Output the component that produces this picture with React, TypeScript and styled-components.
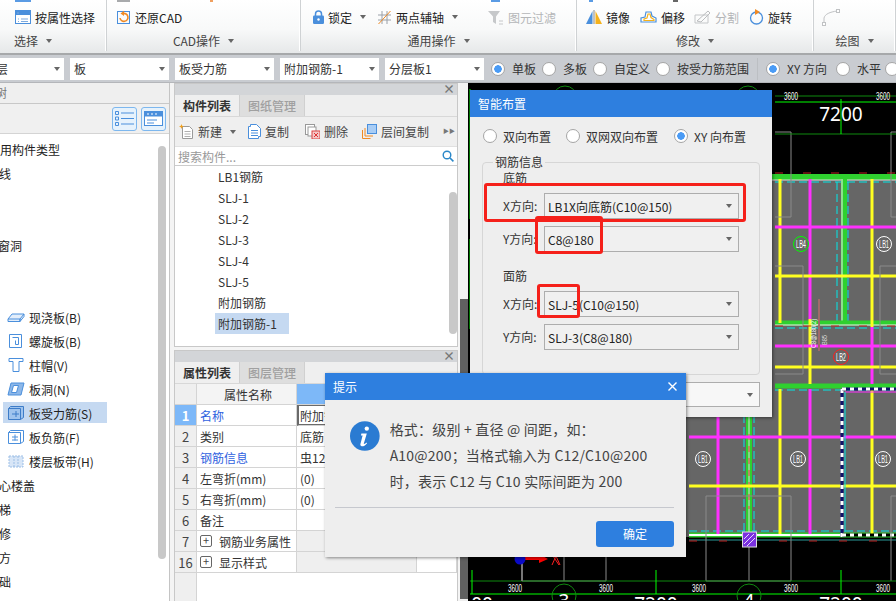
import React from 'react';
import styled, { createGlobalStyle } from 'styled-components';

const GlobalStyle = createGlobalStyle`
  html, body { margin: 0; padding: 0; overflow: hidden; background: #eeeeee; }
  * { box-sizing: border-box; }
  body { font-family: "Noto Sans CJK SC", "Noto Sans", sans-serif; font-size: 12px; color: #333; }
`;

const Page = styled.div`
  position: relative;
  width: 896px;
  height: 601px;
  overflow: hidden;
  display: flex;
  flex-direction: column;
`;

/* ---------- ribbon ---------- */
const Ribbon = styled.div`
  height: 55px;
  flex: none;
  display: flex;
  background: linear-gradient(#ffffff 0%, #f8f9f9 55%, #e6e8e9 100%);
  border-bottom: 2px solid #a6a8aa;
`;
const Group = styled.div<{ $w: number; $ml?: number }>`
  flex: none;
  width: ${p => p.$w}px;
  margin-left: ${p => p.$ml ?? 0}px;
  height: 51px;
  border-right: 1px solid #cfd2d4;
  display: flex;
  flex-direction: column;
  box-shadow: inset -1px 0 0 #fff;
`;
// the row above is scrolled away, only the lower edge of its icons shows
const CutRow = styled.div<{ $pl: number }>`
  height: 3px;
  flex: none;
  padding-left: ${p => p.$pl}px;
  display: flex;
  gap: 80px;
`;
const CutIcon = styled.span<{ $w: number; $tone: string }>`
  flex: none;
  width: ${p => p.$w}px;
  height: 2px;
  background: ${p => p.$tone};
`;
const GroupItems = styled.div<{ $pl: number }>`
  height: 28px;
  flex: none;
  padding-left: ${p => p.$pl}px;
  display: flex;
  align-items: center;
  color: #222;
`;
const GroupLabel = styled.div`
  height: 16px;
  margin-top: 2px;
  line-height: 14px;
  display: flex;
  justify-content: center;
  align-items: center;
  gap: 8px;
  color: #444;
`;
const Item = styled.div<{ $w: number; $off?: boolean }>`
  flex: none;
  width: ${p => p.$w}px;
  display: flex;
  align-items: center;
  gap: 4px;
  white-space: nowrap;
  color: ${p => (p.$off ? '#b4b6b8' : '#222')};
`;
const Caret = styled.i<{ $tone?: string }>`
  flex: none;
  display: inline-block;
  width: 0;
  height: 0;
  border-left: 3.5px solid transparent;
  border-right: 3.5px solid transparent;
  border-top: 4px solid ${p => p.$tone ?? '#666'};
`;
const ItemCaret = styled(Caret)`
  margin-left: 4px;
`;

/* ---------- option bar ---------- */
const OptionBar = styled.div`
  height: 28px;
  flex: none;
  display: flex;
  align-items: center;
  background: #c9ccd1;
  gap: 6px;
  border-bottom: 1px solid #b4b6ba;
`;
const BarSelect = styled.div<{ $w: number; $ml?: number }>`
  flex: none;
  width: ${p => p.$w}px;
  margin-left: ${p => p.$ml ?? 0}px;
  height: 22px;
  padding: 0 4px;
  background: #fff;
  display: flex;
  align-items: center;
  justify-content: space-between;
  color: #333;
`;
const RadioRow = styled.div`
  display: flex;
  align-items: center;
  margin-left: 1px;
`;
const RadioDot = styled.span<{ $on?: boolean }>`
  flex: none;
  width: 14px;
  height: 14px;
  border-radius: 50%;
  border: 1px solid #a5a5a5;
  background: ${p => (p.$on ? 'radial-gradient(circle, #4a9bf5 0 3.5px, #fff 4px)' : '#fff')};
`;
const BarRadio = styled.label<{ $w: number }>`
  flex: none;
  width: ${p => p.$w}px;
  display: flex;
  align-items: center;
  gap: 7px;
  white-space: nowrap;
  color: #333;
`;
const BarDivider = styled.span`
  flex: none;
  width: 1px;
  height: 22px;
  margin: 0 8px 0 7px;
  background: #bcbfc3;
`;

/* ---------- main area ---------- */
const Main = styled.div`
  flex: 1;
  min-height: 0;
  display: flex;
`;
const TreePanel = styled.div`
  position: relative;
  flex: none;
  width: 170px;
  background: #fff;
  border-right: 1px solid #c4c4c4;
  display: flex;
  flex-direction: column;
  overflow: hidden;
`;
const TreeTitle = styled.div`
  height: 21px;
  flex: none;
  margin-left: -29px;
  line-height: 20px;
  background: #efefef;
  border-bottom: 1px solid #c8c8c8;
  color: #777;
`;
const TreeTools = styled.div`
  height: 30px;
  flex: none;
  background: #f0f0f0;
  border-bottom: 1px solid #d4d4d4;
  display: flex;
  justify-content: flex-end;
  align-items: center;
  gap: 4px;
  padding-right: 3px;
`;
const ViewBtn = styled.div`
  width: 25px;
  height: 24px;
  border: 1px solid #7db7ee;
  border-radius: 3px;
  background: #e6f2fc;
  display: flex;
  align-items: center;
  justify-content: center;
`;
const TreeList = styled.div`
  padding-top: 3px;
`;
const TreeRow = styled.div<{ $indent: number; $on?: boolean }>`
  height: 24px;
  display: flex;
  align-items: center;
  gap: 4px;
  white-space: nowrap;
  color: #222;
  margin-left: ${p => p.$indent}px;
`;
const TreeChild = styled(TreeRow)`
  width: 104px;
  height: 24px;
  margin-left: 3px;
  padding-left: 4px;
  background: ${p => (p.$on ? 'linear-gradient(#c5d9f1, #c5d9f1) 0 1px / 100% 21px no-repeat' : 'none')};
`;
const ScrollThumb = styled.div<{ $top: number; $h: number; $right: number }>`
  position: absolute;
  top: ${p => p.$top}px;
  right: ${p => p.$right}px;
  width: 8px;
  height: ${p => p.$h}px;
  border-radius: 4px;
  background: #c8c8c8;
`;

const Center = styled.div`
  flex: none;
  width: 290px;
  padding: 0 2px 0 4px;
  display: flex;
  flex-direction: column;
  gap: 3px;
  background: #f4f4f4;
`;
const Dock = styled.div<{ $h?: number }>`
  position: relative;
  flex: ${p => (p.$h ? `none` : '1')};
  height: ${p => (p.$h ? `${p.$h}px` : 'auto')};
  min-height: 0;
  background: #fff;
  border: 1px solid #c8c8c8;
  border-bottom: ${p => (p.$h ? '1px solid #c8c8c8' : 'none')};
  display: flex;
  flex-direction: column;
  overflow: hidden;
`;
const DockBar = styled.div`
  height: 11px;
  flex: none;
  background: #d3d5d8;
  color: #777;
  font-size: 12px;
  line-height: 10px;
  text-align: right;
  padding-right: 2px;
  font-weight: 700;
`;
const Tabs = styled.div`
  height: 22px;
  flex: none;
  display: flex;
  background: #efefef;
  border-bottom: 1px solid #d8d8d8;
`;
const Tab = styled.div<{ $on?: boolean }>`
  width: 65px;
  text-align: center;
  line-height: 21px;
  border-right: 1px solid #d0d0d0;
  font-weight: ${p => (p.$on ? 700 : 500)};
  color: ${p => (p.$on ? '#333' : '#a0a0a0')};
  background: ${p => (p.$on ? '#efefef' : '#dedede')};
`;
const DockTools = styled.div`
  height: 30px;
  flex: none;
  display: flex;
  align-items: center;
  padding-left: 4px;
  background: #efefef;
  border-bottom: 1px solid #e0e0e0;
  position: relative;
`;
const ToolBtn = styled.div<{ $w: number }>`
  flex: none;
  width: ${p => p.$w}px;
  display: flex;
  align-items: center;
  gap: 4px;
  white-space: nowrap;
  color: #444;
`;
const MoreArrows = styled.span`
  position: absolute;
  right: 2px;
  top: 9px;
  font-size: 6px;
  line-height: 10px;
  color: #777;
`;
const Search = styled.div`
  height: 19px;
  flex: none;
  display: flex;
  align-items: center;
  justify-content: space-between;
  padding: 0 3px;
  color: #999;
  border-bottom: 1px solid #ccc;
`;
const CompList = styled.div`
  padding-left: 40px;
`;
const CompRow = styled.div<{ $on?: boolean }>`
  width: 74px;
  height: 21px;
  line-height: 21px;
  padding-left: 3px;
  white-space: nowrap;
  color: #333;
  background: ${p => (p.$on ? '#c5d9f1' : 'transparent')};
`;

const PropTable = styled.div`
  display: grid;
  grid-template-columns: 22px 100px 120px 40px;
  grid-auto-rows: 21px;
  flex: none;
`;
const Cell = styled.div<{ $bg?: string; $link?: boolean; $center?: boolean; $focus?: boolean }>`
  display: flex;
  align-items: center;
  gap: 7px;
  padding-left: ${p => (p.$focus ? 1 : 3)}px;
  white-space: nowrap;
  overflow: hidden;
  border-right: 1px solid #d4d4d4;
  border-bottom: 1px solid #d4d4d4;
  border-left: ${p => (p.$focus ? '2px solid #6a6a6a' : 'none')};
  box-shadow: ${p => (p.$focus ? 'inset 0 -1px 0 #6a6a6a, inset 0 1px 0 #6a6a6a' : 'none')};
  background: ${p => p.$bg ?? '#fff'};
  color: ${p => (p.$link ? '#2f62e0' : '#333')};
  justify-content: ${p => (p.$center ? 'center' : 'flex-start')};
`;
const NumCell = styled(Cell)<{ $sel?: boolean }>`
  padding: 0;
  justify-content: center;
  font-size: 13px;
  background: ${p => (p.$sel ? '#7db8f8' : '#efefef')};
  color: ${p => (p.$sel ? '#fff' : '#444')};
  font-weight: ${p => (p.$sel ? 700 : 400)};
`;
const PlusBox = styled.span`
  flex: none;
  width: 12px;
  height: 12px;
  margin-left: 0;
  border: 1px solid #666;
  border-radius: 2px;
  font-size: 11px;
  line-height: 9px;
  text-align: center;
  color: #444;
`;
const NumRail = styled.div`
  flex: 1;
  width: 22px;
  background: #efefef;
  border-right: 1px solid #d4d4d4;
`;
const Splitter = styled.div`
  flex: none;
  width: 8px;
  display: flex;
  flex-direction: column;
`;
const SplitPart = styled.div<{ $h?: number; $dark?: boolean }>`
  flex: ${p => (p.$h ? 'none' : '1')};
  height: ${p => (p.$h ? `${p.$h}px` : 'auto')};
  background: ${p => (p.$dark ? '#606060' : '#f2f2f2')};
`;
const Canvas = styled.div`
  flex: 1;
  background: #000;
  overflow: hidden;
`;
const CadSvg = styled.svg`
  display: block;
  width: 431px;
  height: 517px;
`;

/* ---------- dialogs ---------- */
const Dialog = styled.div<{ $x: number; $y: number; $w: number; $h: number }>`
  position: absolute;
  left: ${p => p.$x}px;
  top: ${p => p.$y}px;
  width: ${p => p.$w}px;
  height: ${p => p.$h}px;
  background: #eeeeee;
  box-shadow: 1px 1px 3px rgba(0, 0, 0, 0.45);
  display: flex;
  flex-direction: column;
`;
const DialogHead = styled.div`
  height: 27px;
  flex: none;
  padding: 0 8px;
  display: flex;
  align-items: center;
  justify-content: space-between;
  background: #2e7fdf;
  color: #fff;
`;
const TypeRow = styled.div`
  height: 42px;
  flex: none;
  padding: 0 0 4px 13px;
  display: flex;
  align-items: center;
`;
const TypeRadio = styled.label<{ $w: number }>`
  flex: none;
  width: ${p => p.$w}px;
  display: flex;
  align-items: center;
  gap: 6px;
  white-space: nowrap;
`;
const Fieldset = styled.div`
  position: relative;
  flex: none;
  width: 278px;
  height: 213px;
  margin: 3px 0 0 12px;
  border: 1px solid #d6d6d6;
  border-radius: 4px;
  padding: 6px 0 0 20px;
`;
const Legend = styled.span`
  position: absolute;
  left: 10px;
  top: -9px;
  padding: 0 2px;
  line-height: 16px;
  background: #eeeeee;
`;
const SubTitle = styled.div<{ $mt?: number }>`
  height: 17px;
  line-height: 17px;
  margin-top: ${p => p.$mt ?? 0}px;
  color: #333;
`;
const FieldRow = styled.div`
  height: 26px;
  margin-top: 7px;
  display: flex;
  align-items: center;
`;
const FieldLabel = styled.span`
  flex: none;
  width: 41px;
  margin-top: -2px;
  white-space: nowrap;
`;
const FieldSelect = styled.div<{ $w: number; $h: number; $bg?: string }>`
  flex: none;
  width: ${p => p.$w}px;
  height: ${p => p.$h}px;
  padding: 0 6px 0 3px;
  border: 1px solid #adadad;
  background: ${p => p.$bg ?? '#f0f0f0'};
  display: flex;
  align-items: center;
  justify-content: space-between;
  white-space: nowrap;
  color: #222;
`;
const FooterSelect = styled(FieldSelect)`
  margin: 7px 0 0 auto;
  margin-right: 12px;
`;
const Mark = styled.div<{ $x: number; $y: number; $w: number; $h: number }>`
  position: absolute;
  left: ${p => p.$x}px;
  top: ${p => p.$y}px;
  width: ${p => p.$w}px;
  height: ${p => p.$h}px;
  border: 3px solid #f5201a;
  border-radius: 3px;
`;
const TipBody = styled.div`
  flex: 1;
  padding: 21px 0 0 25px;
  display: flex;
  gap: 10px;
`;
const TipText = styled.div`
  width: 300px;
  margin-top: -5px;
  font-size: 14px;
  letter-spacing: 0.2px;
  line-height: 26px;
  white-space: nowrap;
  color: #444;
`;
const TipFoot = styled.div`
  height: 50px;
  flex: none;
  margin: 0 12px 0 10px;
  border-top: 1px solid #c6c8ce;
  display: flex;
  justify-content: flex-end;
  align-items: center;
`;
const OkBtn = styled.div`
  width: 78px;
  height: 26px;
  margin-top: 3px;
  border-radius: 3px;
  background: #2e7fdf;
  color: #fff;
  text-align: center;
  line-height: 26px;
`;
const CloseX = styled.svg`
  flex: none;
  margin-right: 1px;
`;

/* ---------- icons ---------- */
const I = { blue: '#4a8fdc', orange: '#f08a24', grey: '#b9bbbd' };

const IconSelectAttr = () => (
  <svg width="16" height="15" viewBox="0 0 16 15"><rect x=".5" y=".5" width="15" height="13" fill="#fff" stroke={I.blue} /><rect x="1" y="1" width="14" height="4" fill={I.blue} /><path d="M2 3h2M6 9h7M6 11.5h7M3 9h1M3 11.5h1" stroke="#7ba9de" /></svg>
);
const IconRestore = () => (
  <svg width="15" height="15" viewBox="0 0 15 15"><rect x="1.5" y="1.5" width="12" height="12" fill="none" stroke={I.blue} /><path d="M4 8a4 4 0 1 0 3-4.5" fill="none" stroke={I.orange} strokeWidth="1.6" /><path d="M8 .8 4.5 3.6 8 6z" fill={I.orange} /></svg>
);
const IconLock = () => (
  <svg width="11" height="14" viewBox="0 0 11 14"><path d="M2.5 6V4a3 3 0 0 1 6 0v2" fill="none" stroke="#4a8fdc" strokeWidth="1.5" /><rect y="5.5" width="11" height="8.5" rx="1.2" fill="#4a8fdc" /><circle cx="5.5" cy="9.5" r="1.2" fill="#fff" /></svg>
);
const IconTwoPoint = () => (
  <svg width="15" height="15" viewBox="0 0 15 15"><path d="M1 5h13M1 10h13M5 1v13M10 1v13" stroke="#9aa0a8" /><path d="M1.5 14 13.5 1" stroke={I.orange} /></svg>
);
const IconFilter = () => (
  <svg width="17" height="15" viewBox="0 0 17 15"><path d="M1 1h12L9 6.5V14L6 12V6.5z" fill="#c6c8ca" /><path d="M12 11h4M12 14h4" stroke="#c6c8ca" /></svg>
);
const IconMirror = () => (
  <svg width="16" height="14" viewBox="0 0 16 14"><path d="M6.5 1v13H0z" fill={I.blue} /><path d="M9.5 1v13H16z" fill="#f5b21d" /><path d="M8 0v14" stroke="#888" /></svg>
);
const IconOffset = () => (
  <svg width="17" height="14" viewBox="0 0 17 14"><path d="M1 12V8l4-1 1-5h5l1 4 4 2v4z" fill="#fff" stroke={I.blue} strokeWidth="1.2" /><path d="M4 10.5V9l3-1 1-4h2l1 3.5 3 2v1z" fill="none" stroke="#f5b21d" strokeWidth="1.2" /></svg>
);
const IconSplit = () => (
  <svg width="17" height="14" viewBox="0 0 17 14"><path d="M1 5h13v8H1z" fill="none" stroke="#c4c6c8" /><path d="M3 11 14 1l2 2-9 9z" fill="none" stroke="#bbbdbf" /></svg>
);
const IconRotate = () => (
  <svg width="15" height="16" viewBox="0 0 15 16"><circle cx="7.5" cy="9" r="6" fill="none" stroke={I.blue} strokeWidth="1.3" /><path d="M6 0l5 3-5 3z" fill={I.orange} /></svg>
);
const IconDraw = () => (
  <svg width="18" height="17" viewBox="0 0 18 17"><path d="M2 15V9C3 5 8 3 15 2" fill="none" stroke="#c0c2c4" /><rect x=".5" y="13.5" width="3" height="3" fill="#fff" stroke="#c0c2c4" /><rect x="14.5" y=".5" width="3" height="3" fill="#fff" stroke="#c0c2c4" /></svg>
);
const IconList = () => (
  <svg width="19" height="15" viewBox="0 0 19 15"><path d="M6 2h13M6 7.5h13M6 13h13" stroke="#4a8fdc" /><path d="M.5.5h3v3h-3zM.5 6h3v3h-3zM.5 11.5h3v3h-3z" fill="none" stroke="#4a8fdc" /></svg>
);
const IconCard = () => (
  <svg width="19" height="15" viewBox="0 0 19 15"><rect x=".5" y=".5" width="18" height="14" fill="#fff" stroke="#4a8fdc" /><rect x="1" y="1" width="17" height="4.5" fill="#4a8fdc" /><path d="M3 9h10M3 12h7" stroke="#4a8fdc" /><path d="M3 3h2M7 3h2M11 3h2" stroke="#fff" /></svg>
);
const IconNew = () => (
  <svg width="15" height="15" viewBox="0 0 15 15"><path d="M3.5 2.5h7l3 3v9h-10z" fill="#fff" stroke="#9a9a9a" /><path d="M5.5 7.5h6M5.5 10h6M5.5 12.5h6" stroke="#b0b0b0" /><path d="M2.5 0l.7 1.8L5 2.5l-1.8.7L2.5 5l-.7-1.8L0 2.5l1.8-.7z" fill="#f0a020" /></svg>
);
const IconCopy = () => (
  <svg width="13" height="15" viewBox="0 0 13 15"><path d="M.5 2.5h2v-2h6l4 4v8h-2v2h-10z" fill="#fff" stroke={I.blue} /><path d="M3 6.5h7M3 9h7M3 11.5h7" stroke={I.blue} /></svg>
);
const IconDelete = () => (
  <svg width="15" height="15" viewBox="0 0 15 15"><rect x=".5" y=".5" width="9" height="10" fill="#fff" stroke="#999" /><rect x="3" y="3" width="8" height="9" fill="#fff" stroke="#999" /><rect x="7" y="7" width="8" height="8" fill="#f3c9c9" stroke="#d44" /><path d="M9 9l4 4M13 9l-4 4" stroke="#d33" /></svg>
);
const IconFloorCopy = () => (
  <svg width="15" height="15" viewBox="0 0 15 15"><path d="M.5 6v8.500h8" fill="none" stroke={I.orange} /><path d="M3 4v8h8" fill="none" stroke={I.orange} /><rect x="5.500" y=".5" width="9" height="9" fill="#a9cdf5" stroke={I.blue} /></svg>
);
const IconSearch = () => (
  <svg width="12" height="12" viewBox="0 0 12 12"><circle cx="5" cy="5" r="3.8" fill="none" stroke="#2a87c8" strokeWidth="1.4" /><path d="M8 8l3.400 3.400" stroke="#2a87c8" strokeWidth="1.6" /></svg>
);
const IconInfo = () => (
  <svg width="30" height="30" viewBox="0 0 30 30"><circle cx="15" cy="15" r="15" fill="#2a7bd2" /><circle cx="17" cy="7.500" r="2.200" fill="#fff" /><path d="M11.500 12.500h5.500l-3 10c-.2 1 .8 1 2.800-.8l.5.600c-2.300 2.600-4 3.400-5.500 3.100-1.300-.3-1.500-1.400-1.200-2.500l2.200-8.500h-1.700z" fill="#fff" /></svg>
);

const TreeIcon = ({ kind }: { kind: number }) => {
  const s = '#4a8fdc';
  return (
    <svg width="18" height="16" viewBox="0 0 18 16">
      {kind === 0 && <path d="M1 10l4-5h12l-4 5v2.500H1zM1 10h12M13 10v2.500l4-5V5" fill="#e3eefb" stroke={s} />}
      {kind === 1 && <path d="M2.500 1.500h12v13h-12zM5.500 4.500h6v7h-3V7.500" fill="none" stroke={s} />}
      {kind === 2 && <path d="M2 1.500h14v3h-4v10H6v-10H2z" fill="#fff" stroke={s} />}
      {kind === 3 && <path d="M4 2h13l-3 12H1z M6.500 4.500h5l-2 7h-5z" fill="#8db7e8" fillRule="evenodd" stroke={s} />}
      {kind === 4 && <path d="M1.500 3.500h12v11h-12zM1.500 3.500l2-2h13v11l-3 2M5 9h7M9 6v6" fill="#9fc4ee" stroke="#3d7cc8" />}
      {kind === 5 && <path d="M1.500 3.500h12v11h-12zM1.500 3.500l2-2h13v11l-3 2M5 8h6M8 5.500v6M5 11h6" fill="#fff" stroke={s} />}
      {kind === 6 && <path d="M2 3h14v11H2zM7 3v11M11 3v11" fill="#d8e6f7" stroke="#9dbfe6" strokeDasharray="2 1" />}
    </svg>
  );
};

/* ---------- CAD drawing, coordinates are page pixels ---------- */
const YELLOW = '#ffff20';
const MAGENTA = '#ff30ff';
const GREEN = '#2fd02f';
const BRIGHT = '#00ff00';
const DARKGREEN = '#0f8a0f';
const CYAN = '#00e8e8';
const LINE = '#8a8a8a';

const seg = (x1: number, y1: number, x2: number, y2: number, color: string, w: number, dash?: string) => ({ x1, y1, x2, y2, color, w, dash });

const cadLines = [
  // beams
  seg(470, 178, 896, 178, GREEN, 6),
  seg(470, 181, 896, 181, '#ddd', 1),
  seg(772, 183, 896, 183, CYAN, 1, '8 4'),
  seg(841, 180, 841, 322, GREEN, 6),
  seg(839, 180, 839, 322, '#eee', 1),
  seg(834, 183, 834, 322, CYAN, 1, '8 4'),
  seg(845, 183, 845, 322, CYAN, 1, '8 4'),
  seg(772, 324, 896, 324, GREEN, 5),
  seg(772, 326, 896, 326, '#eee', 1),
  seg(772, 329, 896, 329, CYAN, 1, '8 4'),
  seg(772, 387, 896, 387, GREEN, 5),
  seg(772, 391, 896, 391, CYAN, 1, '8 4'),
  seg(686, 536, 896, 536, GREEN, 5),
  seg(686, 536, 840, 536, '#ffffff', 2),
  seg(686, 532, 896, 532, CYAN, 1, '8 4'),
  seg(686, 541, 896, 541, '#2a9a9a', 1),
  seg(746, 390, 746, 535, GREEN, 6),
  seg(746, 390, 746, 535, '#ddd', 1),
  seg(741, 392, 741, 532, CYAN, 1, '8 4'),
  seg(751, 392, 751, 532, CYAN, 1, '8 4'),
  seg(746, 435, 746, 510, '#f04040', 1, '6 6'),
  // bars
  seg(777, 180, 777, 324, YELLOW, 3),
  seg(777, 390, 777, 535, YELLOW, 3),
  seg(869, 180, 869, 328, YELLOW, 3),
  seg(869, 328, 869, 385, MAGENTA, 3),
  seg(869, 390, 869, 535, YELLOW, 3),
  seg(807, 180, 807, 320, MAGENTA, 3),
  seg(807, 320, 807, 385, YELLOW, 3),
  seg(807, 390, 807, 535, MAGENTA, 3),
  seg(715, 417, 715, 535, MAGENTA, 3),
  seg(772, 228, 896, 228, MAGENTA, 3),
  seg(772, 347, 896, 347, MAGENTA, 3),
  seg(686, 438, 896, 438, MAGENTA, 3),
  seg(772, 277, 896, 277, YELLOW, 3),
  seg(772, 368, 896, 368, YELLOW, 3),
  seg(686, 487, 896, 487, YELLOW, 3),
  // frame of the selected slab
  seg(839, 390, 839, 538, '#10106a', 3),
  seg(839, 390, 839, 538, '#ffffff', 3, '4 4'),
  seg(839, 390, 896, 390, '#10106a', 3),
  seg(839, 390, 896, 390, '#ffffff', 3, '4 4'),
  seg(839, 536, 896, 536, '#000', 3),
  seg(839, 536, 896, 536, '#ffffff', 3, '4 4'),
  seg(842, 393, 896, 393, MAGENTA, 1),
  seg(842, 393, 842, 533, CYAN, 1),
  // column outlines
  seg(772, 133, 788, 133, LINE, 1),
  seg(788, 133, 788, 218, LINE, 1),
  seg(772, 218, 788, 218, LINE, 1),
  seg(896, 133, 888, 133, LINE, 1),
  seg(888, 133, 888, 218, LINE, 1),
  seg(896, 218, 888, 218, LINE, 1),
  seg(772, 267, 800, 267, LINE, 1),
  seg(800, 267, 800, 375, LINE, 1),
  seg(772, 375, 800, 375, LINE, 1),
  seg(896, 267, 877, 267, LINE, 1),
  seg(877, 267, 877, 375, LINE, 1),
  seg(896, 375, 877, 375, LINE, 1),
  seg(703, 497, 703, 582, LINE, 1),
  seg(788, 497, 788, 582, LINE, 1),
  seg(703, 497, 788, 497, LINE, 1),
  seg(888, 497, 888, 582, LINE, 1),
  seg(888, 497, 896, 497, LINE, 1),
  seg(519, 557, 519, 582, LINE, 1),
  seg(603, 557, 603, 582, LINE, 1),
  seg(703, 582, 788, 582, LINE, 1),
  seg(519, 582, 603, 582, LINE, 1),
  seg(561, 557, 561, 582, LINE, 1),
  seg(746, 548, 746, 582, LINE, 1),
  // dimension lines
  seg(772, 97, 896, 97, DARKGREEN, 1),
  seg(772, 103, 896, 103, BRIGHT, 1),
  seg(772, 135, 896, 135, DARKGREEN, 1),
  seg(838, 100, 838, 135, BRIGHT, 1),
  seg(467, 582, 896, 582, DARKGREEN, 1),
  seg(467, 595, 896, 595, BRIGHT, 1),
  seg(469, 571, 469, 595, BRIGHT, 1),
  seg(653, 571, 653, 595, BRIGHT, 1),
  seg(838, 571, 838, 595, BRIGHT, 1),
  seg(467, 90, 467, 220, BRIGHT, 1),
  seg(467, 240, 467, 330, BRIGHT, 1),
  // dimension hint
  seg(816, 300, 816, 352, '#a06a6a', 2),
  // dashed reds on the grid line
  seg(772, 174, 896, 174, '#c02020', 1, '8 20'),
  seg(772, 327, 896, 327, '#c02020', 1, '8 20'),
  seg(686, 542, 896, 542, '#c02020', 1, '8 22'),
];

const slabTags = [
  { x: 798, y: 245, c: BRIGHT, t: 'LB4' },
  { x: 881, y: 245, c: '#fff', t: 'LB1' },
  { x: 838, y: 358, c: '#ff2020', t: 'LB2' },
  { x: 700, y: 460, c: '#fff', t: 'LB1' },
  { x: 795, y: 460, c: '#fff', t: 'LB1' },
  { x: 880, y: 460, c: '#fff', t: 'LB1' },
];
const dims = [
  [788, 101], [880, 101], [512, 593], [603, 593], [696, 593], [788, 593], [880, 593],
];

const CadDrawing = () => (
  <CadSvg viewBox="465 84 431 517">
    <rect x="470" y="178" width="426" height="360" fill="#666666" />
    {cadLines.map((l, i) => (
      <line key={i} x1={l.x1} y1={l.y1} x2={l.x2} y2={l.y2} stroke={l.color} strokeWidth={l.w} strokeDasharray={l.dash} />
    ))}
    {slabTags.map(s => (
      <g key={`${s.x}-${s.y}`}>
        <circle cx={s.x} cy={s.y} r="7.500" fill="none" stroke={s.c} />
        <text x={s.x} y={s.y + 4} textAnchor="middle" fontFamily="Liberation Sans, sans-serif" fontSize="10" textLength="10" lengthAdjust="spacingAndGlyphs" fill="#fff">{s.t}</text>
      </g>
    ))}
    {dims.map(([x, y]) => (
      <text key={`${x}-${y}`} x={x} y={y} textAnchor="middle" fontFamily="Liberation Sans, sans-serif" fontSize="10" textLength="14" lengthAdjust="spacingAndGlyphs" fill="#fff">3600</text>
    ))}
    <text x="838" y="122" textAnchor="middle" fontFamily="Noto Sans, sans-serif" fontSize="19" fill="#fff">7200</text>
    <text x="653" y="612" textAnchor="middle" fontFamily="Noto Sans, sans-serif" fontSize="19" fill="#fff">7200</text>
    <text x="838" y="612" textAnchor="middle" fontFamily="Noto Sans, sans-serif" fontSize="19" fill="#fff">7200</text>
    <text x="479" y="612" textAnchor="middle" fontFamily="Noto Sans, sans-serif" fontSize="19" fill="#fff">00</text>
    <circle cx="561" cy="597" r="12" fill="none" stroke={DARKGREEN} />
    <circle cx="746" cy="597" r="12" fill="none" stroke={DARKGREEN} />
    <circle cx="562" cy="99" r="12" fill="none" stroke={DARKGREEN} />
    <circle cx="745" cy="99" r="12" fill="none" stroke={DARKGREEN} />
    <text x="561" y="609" textAnchor="middle" fontFamily="Noto Sans, sans-serif" fontSize="19" fill="#fff">3</text>
    <text x="746" y="609" textAnchor="middle" fontFamily="Noto Sans, sans-serif" fontSize="19" fill="#fff">4</text>
    <path d="M519 559v23" stroke="#777" strokeWidth="2" fill="none" />
    <path d="M522 558h14v-3l9 5-9 4v-3h-14z" fill="#ff0000" />
    <circle cx="517" cy="560" r="5.500" fill="#0a0ac8" />
    <path d="M549 566l4-9 4 9M550 557l6 9" stroke="#ff2020" fill="none" />
    <rect x="739.500" y="533" width="14" height="15" fill="#7a30e0" stroke="#ddd" />
    <path d="M741 545l10-10M744 547l8-8M741 540l5-5" stroke="#e8d8ff" />
    {/* notes written along the beam */}
    <text transform="translate(813 349) rotate(-90)" fontFamily="Liberation Sans, sans-serif" fontSize="7" textLength="29" lengthAdjust="spacingAndGlyphs" fill="#fff">C8@180(2)</text>
    <text transform="translate(824 346) rotate(-90)" fontFamily="Liberation Sans, sans-serif" fontSize="7" textLength="10" lengthAdjust="spacingAndGlyphs" fill="#ddd">B85</text>
  </CadSvg>
);

/* ---------- data ---------- */
const treeTop: [string, number][] = [
  ['常用构件类型', -12],
  ['轴线', -13],
  ['', 0],
  ['', 0],
  ['门窗洞', -14],
  ['', 0],
  ['', 0],
];
const treeKids = ['现浇板(B)', '螺旋板(B)', '柱帽(V)', '板洞(N)', '板受力筋(S)', '板负筋(F)', '楼层板带(H)'];
const treeTail = ['空心楼盖', '楼梯', '装修', '土方', '基础'];
const comps = ['LB1钢筋', 'SLJ-1', 'SLJ-2', 'SLJ-3', 'SLJ-4', 'SLJ-5', '附加钢筋', '附加钢筋-1'];
const props: { n: string; name: string; val: string; link?: boolean; plus?: boolean }[] = [
  { n: '1', name: '名称', val: '附加钢筋-1', link: true },
  { n: '2', name: '类别', val: '底筋' },
  { n: '3', name: '钢筋信息', val: '虫12', link: true },
  { n: '4', name: '左弯折(mm)', val: '(0)' },
  { n: '5', name: '右弯折(mm)', val: '(0)' },
  { n: '6', name: '备注', val: '' },
  { n: '7', name: '钢筋业务属性', val: '', plus: true },
  { n: '16', name: '显示样式', val: '', plus: true },
];

const App = () => (
  <Page>
    <GlobalStyle />
    <Ribbon>
      <Group $w={147} $ml={-40}>
        <CutRow $pl={55}><CutIcon $w={16} $tone="#5a9be4" /></CutRow>
        <GroupItems $pl={55}>
          <Item $w={80}><IconSelectAttr />按属性选择</Item>
        </GroupItems>
        <GroupLabel>选择<Caret /></GroupLabel>
      </Group>
      <Group $w={194}>
        <CutRow $pl={10}><CutIcon $w={13} $tone="#a8aaac" /><CutIcon $w={3} $tone="#f0a060" /></CutRow>
        <GroupItems $pl={9}>
          <Item $w={80}><IconRestore />还原CAD</Item>
        </GroupItems>
        <GroupLabel>CAD操作<Caret /></GroupLabel>
      </Group>
      <Group $w={276}>
        <CutRow $pl={190}><CutIcon $w={9} $tone="#5a9be4" /></CutRow>
        <GroupItems $pl={12}>
          <Item $w={64}><IconLock />锁定<ItemCaret /></Item>
          <Item $w={110}><IconTwoPoint />两点辅轴<ItemCaret /></Item>
          <Item $off $w={70}><IconFilter />图元过滤</Item>
        </GroupItems>
        <GroupLabel>通用操作<Caret /></GroupLabel>
      </Group>
      <Group $w={237}>
        <CutRow $pl={12}><CutIcon $w={4} $tone="#5a9be4" /><CutIcon $w={5} $tone="#666" /></CutRow>
        <GroupItems $pl={9}>
          <Item $w={54}><IconMirror />镜像</Item>
          <Item $w={54}><IconOffset />偏移</Item>
          <Item $off $w={55}><IconSplit />分割</Item>
          <Item $w={50}><IconRotate />旋转</Item>
        </GroupItems>
        <GroupLabel>修改<Caret /></GroupLabel>
      </Group>
      <Group $w={82}>
        <CutRow $pl={8} />
        <GroupItems $pl={8}><IconDraw /></GroupItems>
        <GroupLabel>绘图<Caret /></GroupLabel>
      </Group>
    </Ribbon>

    <OptionBar>
      <BarSelect $w={84} $ml={-20}><span>首层</span><Caret /></BarSelect>
      <BarSelect $w={99}><span>板</span><Caret /></BarSelect>
      <BarSelect $w={99}><span>板受力筋</span><Caret /></BarSelect>
      <BarSelect $w={99}><span>附加钢筋-1</span><Caret /></BarSelect>
      <BarSelect $w={99}><span>分层板1</span><Caret /></BarSelect>
      <RadioRow>
        <BarRadio $w={51}><RadioDot $on />单板</BarRadio>
        <BarRadio $w={51}><RadioDot />多板</BarRadio>
        <BarRadio $w={63}><RadioDot />自定义</BarRadio>
        <BarRadio $w={94}><RadioDot />按受力筋范围</BarRadio>
        <BarDivider />
        <BarRadio $w={70}><RadioDot $on />XY 方向</BarRadio>
        <BarRadio $w={49}><RadioDot />水平</BarRadio>
        <BarRadio $w={40}><RadioDot /></BarRadio>
      </RadioRow>
    </OptionBar>

    <Main>
      <TreePanel>
        <TreeTitle>导航树</TreeTitle>
        <TreeTools>
          <ViewBtn><IconList /></ViewBtn>
          <ViewBtn><IconCard /></ViewBtn>
        </TreeTools>
        <TreeList>
          {treeTop.map(([t, indent], i) => <TreeRow key={i} $indent={indent}>{t}</TreeRow>)}
          {treeKids.map((t, i) => (
            <TreeChild key={t} $indent={3} $on={i === 4}><TreeIcon kind={i} />{t}</TreeChild>
          ))}
          {treeTail.map(t => <TreeRow key={t} $indent={-13}>{t}</TreeRow>)}
        </TreeList>
        <ScrollThumb $top={63} $h={413} $right={3} />
      </TreePanel>

      <Center>
        <Dock $h={264}>
          <DockBar>×</DockBar>
          <Tabs>
            <Tab $on>构件列表</Tab>
            <Tab>图纸管理</Tab>
          </Tabs>
          <DockTools>
            <ToolBtn $w={69}><IconNew />新建<ItemCaret /></ToolBtn>
            <ToolBtn $w={57}><IconCopy />复制</ToolBtn>
            <ToolBtn $w={57}><IconDelete />删除</ToolBtn>
            <ToolBtn $w={75}><IconFloorCopy />层间复制</ToolBtn>
            <MoreArrows>▶▶</MoreArrows>
          </DockTools>
          <Search>搜索构件...<IconSearch /></Search>
          <CompList>
            {comps.map((c, i) => <CompRow key={c} $on={i === 7}>{c}</CompRow>)}
          </CompList>
          <ScrollThumb $top={108} $h={142} $right={0} />
        </Dock>
        <Dock>
          <DockBar>×</DockBar>
          <Tabs>
            <Tab $on>属性列表</Tab>
            <Tab>图层管理</Tab>
          </Tabs>
          <PropTable>
            <NumCell />
            <Cell $center $bg="#f4f4f4">属性名称</Cell>
            <Cell $bg="#7db8f8" />
            <Cell $bg="#7db8f8" />
            {props.map((p, i) => (
              <React.Fragment key={p.n}>
                <NumCell $sel={i === 0}>{p.n}</NumCell>
                <Cell $link={p.link}>
                  {p.plus && <PlusBox>+</PlusBox>}
                  {p.name}
                </Cell>
                <Cell $focus={i === 0} $bg={p.plus ? '#efefef' : '#fff'}>{p.val}</Cell>
                <Cell />
              </React.Fragment>
            ))}
          </PropTable>
          <NumRail />
        </Dock>
      </Center>

      <Splitter>
        <SplitPart $h={216} />
        <SplitPart $h={300} $dark />
      </Splitter>
      <Canvas><CadDrawing /></Canvas>
    </Main>

    <Dialog $x={470} $y={90} $w={302} $h={327}>
      <DialogHead>智能布置</DialogHead>
      <TypeRow>
        <TypeRadio $w={83}><RadioDot />双向布置</TypeRadio>
        <TypeRadio $w={108}><RadioDot />双网双向布置</TypeRadio>
        <TypeRadio $w={90}><RadioDot $on />XY 向布置</TypeRadio>
      </TypeRow>
      <Fieldset>
        <Legend>钢筋信息</Legend>
        <SubTitle>底筋</SubTitle>
        <FieldRow>
          <FieldLabel>X方向:</FieldLabel>
          <FieldSelect $w={195} $h={26}>LB1X向底筋(C10@150)<Caret /></FieldSelect>
        </FieldRow>
        <FieldRow>
          <FieldLabel>Y方向:</FieldLabel>
          <FieldSelect $w={195} $h={26}>C8@180<Caret /></FieldSelect>
        </FieldRow>
        <SubTitle $mt={15}>面筋</SubTitle>
        <FieldRow>
          <FieldLabel>X方向:</FieldLabel>
          <FieldSelect $w={195} $h={26}>SLJ-5(C10@150)<Caret /></FieldSelect>
        </FieldRow>
        <FieldRow>
          <FieldLabel>Y方向:</FieldLabel>
          <FieldSelect $w={195} $h={26}>SLJ-3(C8@180)<Caret /></FieldSelect>
        </FieldRow>
      </Fieldset>
      <FooterSelect $w={200} $h={25} $bg="#f7f7f7"><span /><Caret /></FooterSelect>
      <Mark $x={14} $y={93} $w={262} $h={39} />
      <Mark $x={65} $y={126} $w={68} $h={38} />
      <Mark $x={67} $y={194} $w={43} $h={34} />
    </Dialog>

    <Dialog $x={325} $y={373} $w={361} $h={184}>
      <DialogHead>
        提示
        <CloseX width="9" height="9" viewBox="0 0 9 9"><path d="M.5.5l8 8M8.500.5l-8 8" stroke="#fff" strokeWidth="1.4" /></CloseX>
      </DialogHead>
      <TipBody>
        <IconInfo />
        <TipText>
          格式：级别 + 直径 @ 间距，如：<br />
          A10@200；当格式输入为 C12/C10@200<br />
          时，表示 C12 与 C10 实际间距为 200
        </TipText>
      </TipBody>
      <TipFoot><OkBtn>确定</OkBtn></TipFoot>
    </Dialog>
  </Page>
);

export default App;
